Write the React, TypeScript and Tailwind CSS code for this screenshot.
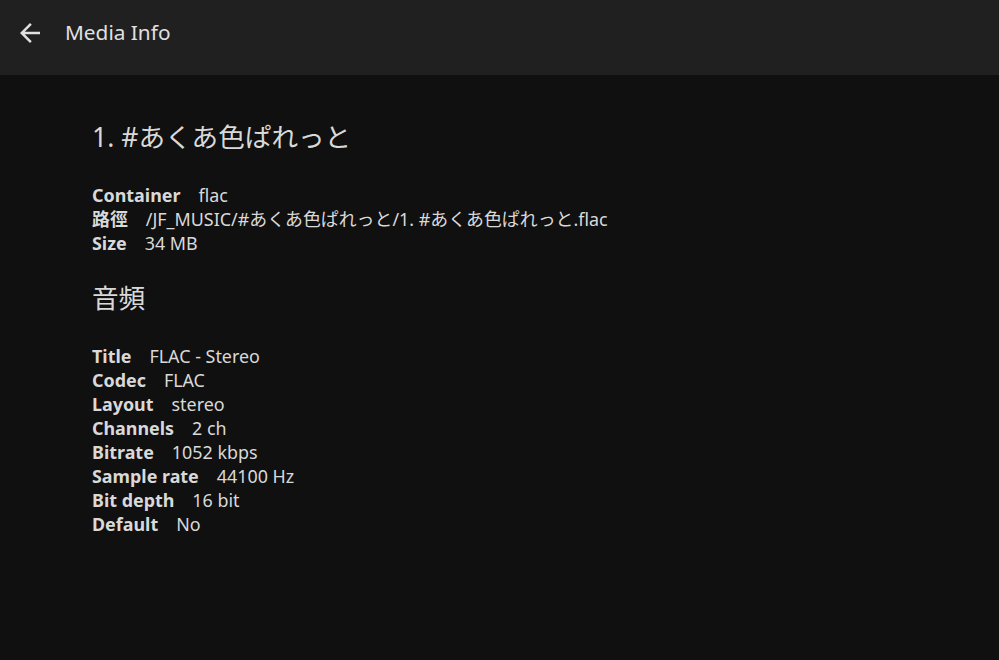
import React from "react";

const Row = ({ label, value }: { label: string; value: string }) => (
  <div className="flex leading-[24px] whitespace-nowrap">
    <span className="font-bold">{label}</span>
    <span className="ml-[18px]">{value}</span>
  </div>
);

export default function App() {
  return (
    <div
      className="w-[999px] h-[660px] bg-[#101010] text-[#d9d9d9] flex flex-col overflow-hidden"
      style={{ fontFamily: '"Noto Sans", "Noto Sans CJK JP", sans-serif' }}
    >
      <header className="h-[75px] bg-[#202020] flex items-start shrink-0">
        <div className="h-[65px] flex items-center">
          <button className="ml-[15px] w-[30px] h-[30px] flex items-center justify-center text-[#e0e0e0]">
            <svg width="30" height="30" viewBox="0 0 24 24" fill="currentColor">
              <path d="M20 11H7.83l5.59-5.59L12 4l-8 8 8 8 1.41-1.41L7.83 13H20v-2z" />
            </svg>
          </button>
          <h1 className="ml-[20px] text-[20.8px] text-[#e0e0e0]">Media Info</h1>
        </div>
      </header>
      <main className="pl-[92px] pt-[44px] text-[17.9px]">
        <h2 className="text-[26.6px] leading-[36px] mb-[28px]">1. #あくあ色ぱれっと</h2>
        <Row label="Container" value="flac" />
        <Row label="路徑" value="/JF_MUSIC/#あくあ色ぱれっと/1. #あくあ色ぱれっと.flac" />
        <Row label="Size" value="34 MB" />
        <h2 className="text-[26.6px] leading-[36px] mt-[25px] mb-[28px]">音頻</h2>
        <Row label="Title" value="FLAC - Stereo" />
        <Row label="Codec" value="FLAC" />
        <Row label="Layout" value="stereo" />
        <Row label="Channels" value="2 ch" />
        <Row label="Bitrate" value="1052 kbps" />
        <Row label="Sample rate" value="44100 Hz" />
        <Row label="Bit depth" value="16 bit" />
        <Row label="Default" value="No" />
      </main>
    </div>
  );
}
